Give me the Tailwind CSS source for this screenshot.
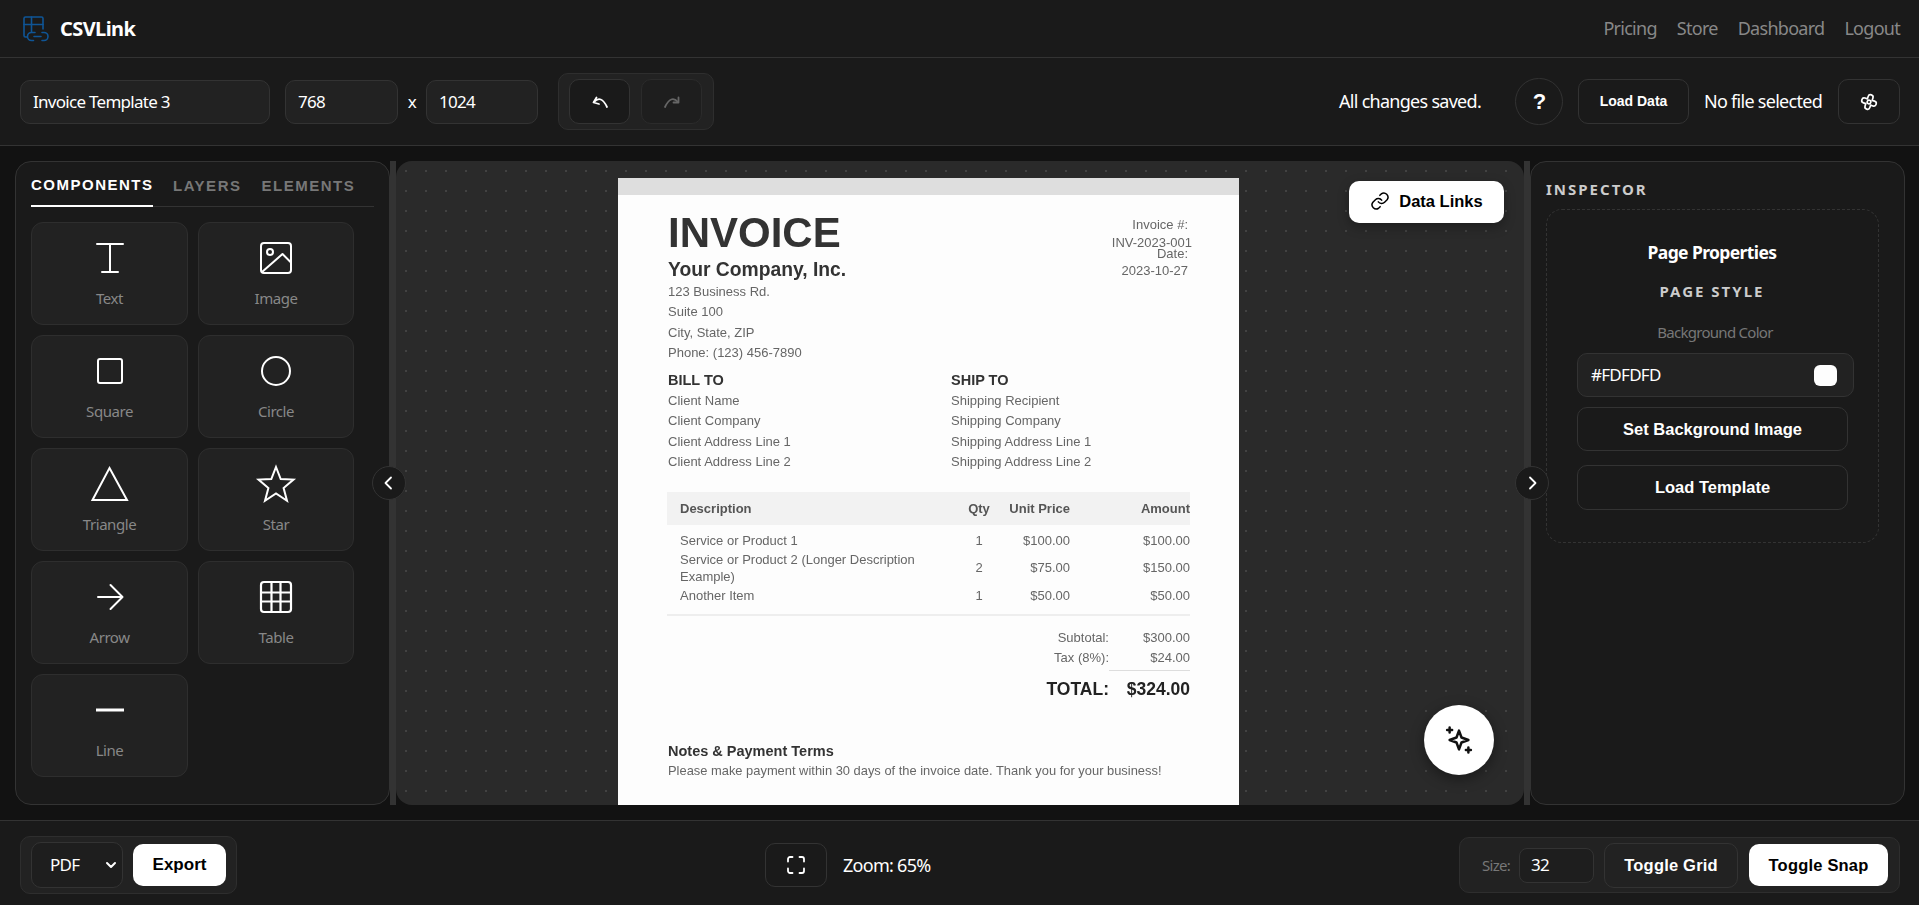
<!DOCTYPE html>
<html>
<head>
<meta charset="utf-8">
<script src="https://cdn.jsdelivr.net/npm/@tailwindcss/browser@4"></script>
</head>
<body class="bg-[#121212]">
<div class="h-[905px] w-[1919px] overflow-hidden flex flex-col bg-[#121212] text-white font-['Noto_Sans',sans-serif] tracking-[-0.045em]">

  <header class="h-[58px] shrink-0 bg-[#1a1a1a] border-b border-[#333] flex items-center justify-between pl-[23px] pr-[19px]">
    <div class="flex items-center gap-[11px]">
      <svg width="26" height="26" viewBox="0 0 26 26" fill="none" stroke="#0f5596" stroke-width="1.6" stroke-linecap="round" stroke-linejoin="round"><path d="M4 21H2.500A1.500 1.500 0 0 1 1 19.500V2.500A1.500 1.500 0 0 1 2.500 1h16A1.500 1.500 0 0 1 20 2.500V13"/><path d="M1 8.500h19M8.500 1v15"/><path d="M9 16.500H8.500a4 4 0 0 0 0 8h2M19 16.500h2a4 4 0 0 1 0 8h-2M11 20.500h7M9 16.500h3"/></svg>
      <span class="text-[20px] font-bold tracking-[-0.03em] text-white">CSVLink</span>
    </div>
    <nav class="flex items-center gap-[20px] text-[18px] tracking-[-0.04em] text-[#888]">
      <a>Pricing</a><a>Store</a><a>Dashboard</a><a>Logout</a>
    </nav>
  </header>

  <div class="h-[88px] shrink-0 bg-[#1a1a1a] border-b border-[#333] flex items-center pl-[20px] pr-[19px]">
    <div class="w-[250px] h-[44px] rounded-[10px] bg-[#222] border border-[#333] flex items-center px-[12px] text-[17px]">Invoice Template 3</div>
    <div class="ml-[15px] w-[113px] h-[44px] rounded-[10px] bg-[#222] border border-[#333] flex items-center px-[12px] text-[17px]">768</div>
    <span class="w-[28px] text-center text-[17px]">x</span>
    <div class="w-[112px] h-[44px] rounded-[10px] bg-[#222] border border-[#333] flex items-center px-[12px] text-[17px]">1024</div>
    <div class="ml-[20px] w-[156px] h-[57px] rounded-[10px] bg-[#222] border border-[#2e2e2e] flex items-center gap-[11px] pl-[10px]">
      <button class="w-[61px] h-[45px] rounded-[10px] bg-[#1a1a1a] border border-[#333] flex items-center justify-center">
        <svg width="18" height="18" viewBox="0 0 18 18" fill="none" stroke="#fff" stroke-width="1.8" stroke-linecap="round" stroke-linejoin="round"><path d="M3 9Q10 1.500 16 14"/><path d="M5.500 4.500 2.500 9.500 8 11"/></svg>
      </button>
      <button class="w-[61px] h-[45px] rounded-[10px] bg-[#1e1e1e] border border-[#2b2b2b] flex items-center justify-center">
        <svg width="18" height="18" viewBox="0 0 18 18" fill="none" stroke="#666" stroke-width="1.8" stroke-linecap="round" stroke-linejoin="round"><path d="M15 9Q8 1.500 2 14"/><path d="M15.500 4.500V9.500H10.500"/></svg>
      </button>
    </div>
    <div class="ml-auto text-[18px]">All changes saved.</div>
    <button class="ml-[34px] w-[48px] h-[47px] rounded-full bg-[#1a1a1a] border border-[#333] text-[22px] font-bold font-['Liberation_Sans',sans-serif] flex items-center justify-center">?</button>
    <button class="ml-[15px] w-[111px] h-[45px] rounded-[10px] bg-[#1a1a1a] border border-[#333] text-[14px] font-bold font-['Liberation_Sans',sans-serif] tracking-normal">Load Data</button>
    <span class="ml-[15px] text-[18px]">No file selected</span>
    <button class="ml-[16px] w-[62px] h-[45px] rounded-[10px] bg-[#1a1a1a] border border-[#333] flex items-center justify-center">
      <svg width="20" height="20" viewBox="0 0 24 24" fill="none" stroke="#fff" stroke-width="2" stroke-linecap="round" stroke-linejoin="round"><g transform="rotate(18 12 12)"><path d="M15 6a3 3 0 1 0-6 0v3H6a3 3 0 1 0 0 6h3v3a3 3 0 1 0 6 0v-3h3a3 3 0 1 0 0-6h-3z"/><circle cx="12" cy="12" r="2.200"/></g></svg>
    </button>
  </div>

  <main class="relative flex-1 min-h-0 flex pl-[15px] pr-[14px] py-[15px] bg-[#121212]">
    <aside class="w-[375px] shrink-0 rounded-[16px] bg-[#1a1a1a] border border-[#333] px-[15px] pt-[11px]">
      <div class="flex h-[34px] border-b border-[#333] gap-[20px] font-['Liberation_Sans',sans-serif] font-bold text-[15px] tracking-[1.5px] text-[#777]">
        <button class="h-[34px] w-[122px] pb-[8px] text-left text-white border-b-2 border-white">COMPONENTS</button>
        <button class="h-[32px] pb-[6px] text-left">LAYERS</button>
        <button class="h-[32px] pb-[6px] text-left">ELEMENTS</button>
      </div>
      <div class="mt-[15px] grid grid-cols-[157px_156px] auto-rows-[103px] gap-x-[10px] gap-y-[10px] text-[15px] tracking-[-0.03em] text-[#888]">
        <div class="rounded-[12px] bg-[#222] border border-[#2e2e2e] flex flex-col items-center pt-[19px]">
          <svg class="overflow-visible" width="32" height="32" viewBox="0 0 32 32" fill="none" stroke="#fff" stroke-width="2" stroke-linecap="round" stroke-linejoin="round"><path d="M3 2h26M8 30h16M16 2v28"/></svg>
          <span class="mt-[13px]">Text</span>
        </div>
        <div class="rounded-[12px] bg-[#222] border border-[#2e2e2e] flex flex-col items-center pt-[19px]">
          <svg class="overflow-visible" width="32" height="32" viewBox="0 0 32 32" fill="none" stroke="#fff" stroke-width="2" stroke-linecap="round" stroke-linejoin="round"><rect x="1" y="1" width="30" height="30" rx="3"/><circle cx="10" cy="10" r="3"/><path d="M2 30 22.500 12 31 20.500"/></svg>
          <span class="mt-[13px]">Image</span>
        </div>
        <div class="rounded-[12px] bg-[#222] border border-[#2e2e2e] flex flex-col items-center pt-[19px]">
          <svg class="overflow-visible" width="32" height="32" viewBox="0 0 32 32" fill="none" stroke="#fff" stroke-width="2" stroke-linecap="round" stroke-linejoin="round"><rect x="4" y="4" width="24" height="24" rx="2"/></svg>
          <span class="mt-[13px]">Square</span>
        </div>
        <div class="rounded-[12px] bg-[#222] border border-[#2e2e2e] flex flex-col items-center pt-[19px]">
          <svg class="overflow-visible" width="32" height="32" viewBox="0 0 32 32" fill="none" stroke="#fff" stroke-width="2"><circle cx="16" cy="16" r="14"/></svg>
          <span class="mt-[13px]">Circle</span>
        </div>
        <div class="rounded-[12px] bg-[#222] border border-[#2e2e2e] flex flex-col items-center pt-[19px]">
          <svg class="overflow-visible" width="32" height="32" viewBox="0 0 32 32" fill="none" stroke="#fff" stroke-width="2"><path d="M15.500 0 33 32H-1.500z"/></svg>
          <span class="mt-[13px]">Triangle</span>
        </div>
        <div class="rounded-[12px] bg-[#222] border border-[#2e2e2e] flex flex-col items-center pt-[19px]">
          <svg class="overflow-visible" width="32" height="32" viewBox="0 0 32 32" fill="none" stroke="#fff" stroke-width="2"><path d="M16-1 20.700 11 33.500 11.600 23.600 20 27 32.800 16 25.500 5 32.800 8.400 20-1.500 11.600 11.300 11z"/></svg>
          <span class="mt-[13px]">Star</span>
        </div>
        <div class="rounded-[12px] bg-[#222] border border-[#2e2e2e] flex flex-col items-center pt-[19px]">
          <svg class="overflow-visible" width="32" height="32" viewBox="0 0 32 32" fill="none" stroke="#fff" stroke-width="2" stroke-linecap="round" stroke-linejoin="round"><path d="M4 16h24.500M16.500 4 28.500 16 16.500 28"/></svg>
          <span class="mt-[13px]">Arrow</span>
        </div>
        <div class="rounded-[12px] bg-[#222] border border-[#2e2e2e] flex flex-col items-center pt-[19px]">
          <svg class="overflow-visible" width="32" height="32" viewBox="0 0 32 32" fill="none" stroke="#fff" stroke-width="2.200"><rect x="1" y="1" width="30" height="30" rx="3"/><path d="M11.500 1v30M20.500 1v30M1 11.500h30M1 20.500h30"/></svg>
          <span class="mt-[13px]">Table</span>
        </div>
        <div class="rounded-[12px] bg-[#222] border border-[#2e2e2e] flex flex-col items-center pt-[19px]">
          <svg class="overflow-visible" width="32" height="32" viewBox="0 0 32 32" fill="none" stroke="#fff" stroke-width="3"><path d="M2 16h28"/></svg>
          <span class="mt-[13px]">Line</span>
        </div>
      </div>
    </aside>

    <div class="w-[6px] shrink-0 bg-[#333]"></div>

    <section class="relative w-[1128px] shrink-0 rounded-[16px] overflow-hidden bg-[#2a2a2a] bg-[radial-gradient(circle,#424242_1px,transparent_1px)] bg-[size:20px_20px]">
      <div class="absolute left-[222px] top-[17px] w-[621px] h-[700px] bg-[#fdfdfd] font-['Liberation_Sans',sans-serif] tracking-normal text-[13px] text-[#666] blur-[0.4px]">
        <div class="h-[17px] bg-[#dedede]"></div>
        <div class="relative px-[50px] pt-[15px]">
          <div class="flex justify-between items-start">
            <div>
              <div class="text-[42px] leading-[46px] font-bold text-[#333]">INVOICE</div>
              <div class="text-[19.300px] leading-[25px] font-bold text-[#333] mt-[1px]">Your Company, Inc.</div>
              <div class="leading-[20.300px]">123 Business Rd.<br>Suite 100<br>City, State, ZIP<br>Phone: (123) 456-7890</div>
            </div>
            <div class="text-right pt-[7px] pr-[1px] leading-[16px] w-[120px]">
              <div>Invoice #:</div>
              <div class="mt-[2px] mr-[-4px]">INV-2023-001</div>
              <div class="mt-[-5px]">Date:</div>
              <div class="mt-[1px]">2023-10-27</div>
            </div>
          </div>
          <div class="grid grid-cols-[283px_1fr] mt-[7px]">
            <div>
              <div class="text-[14.500px] leading-[20px] font-bold text-[#333]">BILL TO</div>
              <div class="leading-[20.300px] mt-[1px]">Client Name<br>Client Company<br>Client Address Line 1<br>Client Address Line 2</div>
            </div>
            <div>
              <div class="text-[14.500px] leading-[20px] font-bold text-[#333]">SHIP TO</div>
              <div class="leading-[20.300px] mt-[1px]">Shipping Recipient<br>Shipping Company<br>Shipping Address Line 1<br>Shipping Address Line 2</div>
            </div>
          </div>
          <div class="mt-[19.500px] w-[523px] -ml-[1px]">
            <div class="h-[33px] bg-[#f2f2f2] grid grid-cols-[13px_274px_1fr_70px_120px] items-center font-bold text-[#555] whitespace-nowrap">
              <span></span><span>Description</span><span class="text-center pl-[4px]">Qty</span><span class="text-right">Unit Price</span><span class="text-right">Amount</span>
            </div>
            <div class="grid grid-cols-[13px_274px_1fr_70px_120px] items-center leading-[17px] border-b-2 border-[#eee] pt-[6px] pb-[9px]">
              <span></span><span class="py-[1px]">Service or Product 1</span><span class="text-center pl-[4px]">1</span><span class="text-right">$100.00</span><span class="text-right">$100.00</span>
              <span></span><span class="py-[1px]">Service or Product 2 (Longer Description Example)</span><span class="text-center pl-[4px]">2</span><span class="text-right">$75.00</span><span class="text-right">$150.00</span>
              <span></span><span class="py-[1px]">Another Item</span><span class="text-center pl-[4px]">1</span><span class="text-right">$50.00</span><span class="text-right">$50.00</span>
            </div>
            <div class="grid grid-cols-[1fr_81px] mt-[12px] gap-x-0 leading-[20px] text-right">
              <span>Subtotal:</span><span>$300.00</span>
              <span>Tax (8%):</span><span class="border-b border-[#ddd] h-[23px]">$24.00</span>
              <span class="text-[17.500px] leading-[32px] font-bold text-[#222] mt-[2px]">TOTAL:</span><span class="text-[17.500px] leading-[32px] font-bold text-[#222] mt-[2px] -ml-[20px]">$324.00</span>
            </div>
          </div>
          <div class="mt-[36px] text-[14.500px] leading-[20px] font-bold text-[#333]">Notes &amp; Payment Terms</div>
          <div class="text-[12.900px] leading-[20px] text-[#666] whitespace-nowrap">Please make payment within 30 days of the invoice date. Thank you for your business!</div>
        </div>
      </div>

      <button class="absolute left-[953px] top-[20px] w-[155px] h-[42px] pb-[2px] rounded-[10px] bg-white text-black shadow-[0_4px_12px_rgba(0,0,0,0.3)] flex items-center justify-center gap-[9px] font-['Liberation_Sans',sans-serif] tracking-normal font-bold text-[16.500px]">
        <svg width="20" height="20" viewBox="0 0 24 24" fill="none" stroke="#000" stroke-width="1.800" stroke-linecap="round" stroke-linejoin="round"><path d="M10 13a5 5 0 0 0 7.500.500l3-3a5 5 0 0 0-7-7l-1.700 1.700"/><path d="M14 11a5 5 0 0 0-7.500-.500l-3 3a5 5 0 0 0 7 7l1.700-1.700"/></svg>
        Data Links
      </button>

      <button class="absolute left-[1028px] top-[544px] w-[70px] h-[70px] rounded-full bg-white shadow-[0_4px_14px_rgba(0,0,0,0.4)] flex items-center justify-center">
        <svg width="30" height="30" viewBox="0 0 24 24" fill="none" stroke="#111" stroke-width="2" stroke-linecap="round" stroke-linejoin="round"><path d="M12 4.500 14 10l5.500 2-5.500 2-2 5.500-2-5.500-5.500-2L10 10z"/><path d="M4.500 2v4M2.500 4h4M19.500 18v4M17.500 20h4"/></svg>
      </button>
    </section>

    <div class="w-[6px] shrink-0 bg-[#333]"></div>

    <aside class="flex-1 rounded-[16px] bg-[#1a1a1a] border border-[#333] px-[15px] pt-[17px]">
      <div class="text-[15px] font-bold tracking-[2px] text-[#ccc] leading-[20px]">INSPECTOR</div>
      <div class="mt-[10px] h-[334px] w-[333px] rounded-[16px] border border-dashed border-[#333] pt-[30px] pl-[30px]">
        <div class="w-[270px] text-center text-[17.500px] font-bold leading-[24px] tracking-[-0.035em]">Page Properties</div>
        <div class="w-[270px] text-center text-[15px] font-bold tracking-[2px] text-[#ccc] leading-[20px] mt-[17px]">PAGE STYLE</div>
        <div class="w-[276px] text-center text-[15px] text-[#777] leading-[20px] mt-[21px]">Background Color</div>
        <div class="mt-[11px] w-[277px] h-[44px] rounded-[10px] bg-[#222] border border-[#333] flex items-center justify-between pl-[13px] pr-[16px] text-[17px]">
          #FDFDFD
          <span class="w-[23px] h-[21px] rounded-[6px] bg-[#fdfdfd]"></span>
        </div>
        <button class="mt-[10px] block w-[271px] h-[44px] rounded-[10px] bg-[#1a1a1a] border border-[#333] font-['Liberation_Sans',sans-serif] tracking-normal font-bold text-[16.500px]">Set Background Image</button>
        <button class="mt-[14px] block w-[271px] h-[45px] rounded-[10px] bg-[#1a1a1a] border border-[#333] font-['Liberation_Sans',sans-serif] tracking-normal font-bold text-[16.500px]">Load Template</button>
      </div>
    </aside>

    <button class="absolute left-[372px] top-[320px] w-[34px] h-[34px] rounded-full bg-[#1a1a1a] border border-[#333] flex items-center justify-center">
      <svg width="16" height="16" viewBox="0 0 16 16" fill="none" stroke="#fff" stroke-width="1.800" stroke-linecap="round" stroke-linejoin="round"><path d="M10 2.500 4.500 8l5.500 5.500"/></svg>
    </button>
    <button class="absolute left-[1515px] top-[320px] w-[34px] h-[34px] rounded-full bg-[#1a1a1a] border border-[#333] flex items-center justify-center">
      <svg width="16" height="16" viewBox="0 0 16 16" fill="none" stroke="#fff" stroke-width="1.800" stroke-linecap="round" stroke-linejoin="round"><path d="M6 2.500 11.500 8 6 13.500"/></svg>
    </button>
  </main>

  <footer class="h-[85px] shrink-0 bg-[#1a1a1a] border-t border-[#333] relative flex items-center justify-between pl-[20px] pr-[19px] pt-[4px]">
    <div class="w-[217px] h-[58px] rounded-[10px] bg-[#222] border border-[#2e2e2e] flex items-center pl-[10px] gap-[10px]">
      <div class="w-[92px] h-[46px] rounded-[10px] bg-[#1e1e1e] border border-[#333] flex items-center justify-between pl-[18px] pr-[5px] text-[17px]">
        PDF
        <svg width="12" height="12" viewBox="0 0 12 12" fill="none" stroke="#fff" stroke-width="2" stroke-linecap="round" stroke-linejoin="round"><path d="M2 4l4 4 4-4"/></svg>
      </div>
      <button class="w-[93px] h-[42px] rounded-[10px] bg-white text-black font-['Liberation_Sans',sans-serif] tracking-normal font-bold text-[17px]">Export</button>
    </div>
    <div class="absolute left-[765px] top-[22px] flex items-center gap-[16px]">
      <button class="w-[62px] h-[44px] rounded-[10px] bg-[#1a1a1a] border border-[#333] flex items-center justify-center">
        <svg width="20" height="20" viewBox="0 0 20 20" fill="none" stroke="#fff" stroke-width="1.800" stroke-linecap="round" stroke-linejoin="round"><path d="M2 6.500V4a2 2 0 0 1 2-2h2.500M13.500 2H16a2 2 0 0 1 2 2v2.500M18 13.500V16a2 2 0 0 1-2 2h-2.500M6.500 18H4a2 2 0 0 1-2-2v-2.500"/></svg>
      </button>
      <span class="text-[18px]">Zoom: 65%</span>
    </div>
    <div class="w-[441px] h-[56px] rounded-[10px] bg-[#222] border border-[#2e2e2e] flex items-center pl-[22px]">
      <span class="text-[15px] text-[#777]">Size:</span>
      <div class="ml-[9px] w-[75px] h-[35px] rounded-[8px] bg-[#1e1e1e] border border-[#333] flex items-center px-[11px] text-[17px]">32</div>
      <button class="ml-[10px] w-[134px] h-[45px] rounded-[10px] bg-[#222] border border-[#333] font-['Liberation_Sans',sans-serif] tracking-[0.2px] font-bold text-[16.500px]">Toggle Grid</button>
      <button class="ml-[11px] w-[139px] h-[42px] rounded-[10px] bg-white text-black font-['Liberation_Sans',sans-serif] tracking-[0.2px] font-bold text-[16.500px]">Toggle Snap</button>
    </div>
  </footer>
</div>
</body>
</html>
